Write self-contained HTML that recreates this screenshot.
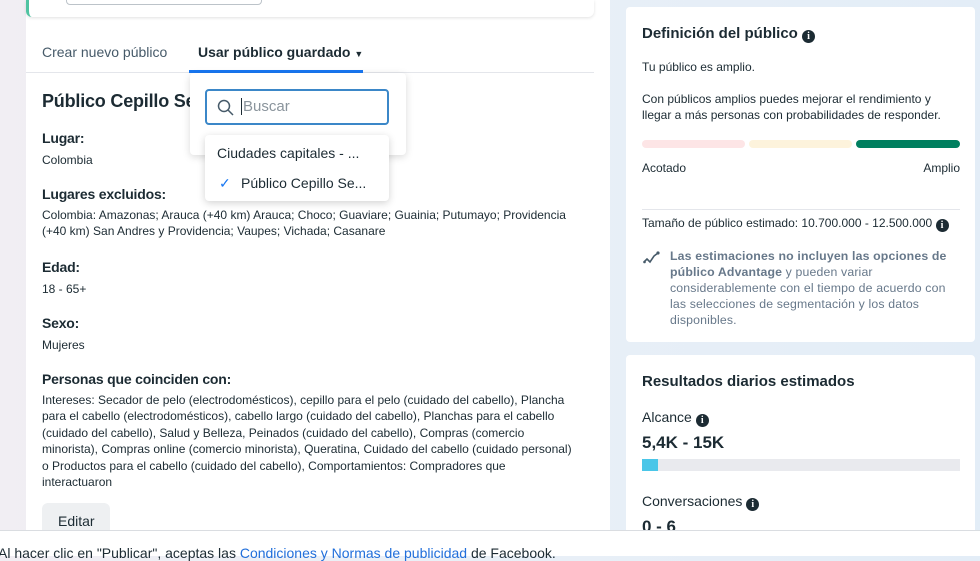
<!DOCTYPE html>
<html><head><meta charset="utf-8"><style>
*{box-sizing:border-box;margin:0;padding:0}
body{width:980px;height:556px;overflow:hidden;font-family:"Liberation Sans",sans-serif;color:#1c2b33;background:linear-gradient(90deg,#f1eef3 0%,#eaf0f7 40%,#e3edf7 100%);position:relative}
.main{position:absolute;left:26px;top:0;width:584px;height:540px;background:#fff}
.topcard{position:absolute;left:26px;top:0;width:568px;height:17px;background:#fff;border-left:3px solid #4fc3a1;border-radius:0 0 6px 6px;box-shadow:0 1px 3px rgba(0,0,0,.12)}
.topinput{position:absolute;left:37px;top:-6px;width:196px;height:11px;border:1px solid #bcc3c9;border-radius:4px}
.tabs{position:absolute;left:26px;top:38px;width:568px;height:35px;border-bottom:1px solid #e4e6eb}
.tab{position:absolute;top:6px;font-size:14px}
.sel{position:absolute;left:163px;top:32px;width:174px;height:3px;background:#1877f2}
.t{position:absolute;left:42px;font-size:12px;line-height:16.4px}
.h{position:absolute;left:42px;font-size:14px;font-weight:bold;letter-spacing:-.2px}
.pop{position:absolute;left:190px;top:73px;width:216px;height:82px;background:#fff;border-radius:4px;box-shadow:0 2px 8px rgba(0,0,0,.15)}
.search{position:absolute;left:205px;top:89px;width:184px;height:36px;border:2px solid #3b87c8;border-radius:4px;background:#fff}
.list{position:absolute;left:205px;top:135px;width:184px;height:66px;background:#fff;border-radius:4px;box-shadow:0 2px 8px rgba(0,0,0,.18)}
.card{position:absolute;left:626px;background:#fff;border-radius:4px;width:349px}
.r{position:absolute;font-size:12px}
.foot{position:absolute;left:0;top:530px;width:980px;height:26px;background:#fff;border-top:1px solid #dadde1;font-size:14px;padding:14px 0 0 0px}
.btn{position:absolute;left:42px;top:503px;width:68px;height:32px;background:#eef0f2;border-radius:6px;font-size:14px;padding:10px 0 0 16px}
.i{display:inline-block;width:13px;height:13px;border-radius:50%;background:#1c2b33;color:#fff;font-size:10px;font-weight:bold;text-align:center;line-height:13px;vertical-align:-1px;font-family:"Liberation Serif",serif}
</style></head><body>
<div class="main"></div>
<div class="topcard"><div class="topinput"></div></div>
<div class="tabs">
 <div class="tab" style="left:16px;color:#465a69">Crear nuevo público</div>
 <div class="tab" style="left:172px;font-weight:bold;">Usar público guardado <span style="font-size:9px">▼</span></div>
 <div class="sel"></div>
</div>
<div class="h" style="top:91px;font-size:18px">Público Cepillo Se</div>
<div class="h" style="top:130px">Lugar:</div>
<div class="t" style="top:152px">Colombia</div>
<div class="h" style="top:186px">Lugares excluidos:</div>
<div class="t" style="top:207px">Colombia: Amazonas; Arauca (+40 km) Arauca; Choco; Guaviare; Guainia; Putumayo; Providencia<br>(+40 km) San Andres y Providencia; Vaupes; Vichada; Casanare</div>
<div class="h" style="top:259px">Edad:</div>
<div class="t" style="top:281px">18 - 65+</div>
<div class="h" style="top:315px">Sexo:</div>
<div class="t" style="top:337px">Mujeres</div>
<div class="h" style="top:371px">Personas que coinciden con:</div>
<div class="t" style="top:392px;width:535px">Intereses: Secador de pelo (electrodomésticos), cepillo para el pelo (cuidado del cabello), Plancha<br>para el cabello (electrodomésticos), cabello largo (cuidado del cabello), Planchas para el cabello<br>(cuidado del cabello), Salud y Belleza, Peinados (cuidado del cabello), Compras (comercio<br>minorista), Compras online (comercio minorista), Queratina, Cuidado del cabello (cuidado personal)<br>o Productos para el cabello (cuidado del cabello), Comportamientos: Compradores que<br>interactuaron</div>
<div class="btn">Editar</div>

<div class="pop"></div>
<div class="search">
 <svg style="position:absolute;left:10px;top:8px" width="17" height="17" viewBox="0 0 17 17"><circle cx="7" cy="7" r="5.5" fill="none" stroke="#465a69" stroke-width="1.5"/><path d="M11 11l5 5" stroke="#465a69" stroke-width="1.5"/></svg>
 <div style="position:absolute;left:34px;top:7px;font-size:15px;color:#8a949c;border-left:1px solid #1c2b33;padding-left:1px">Buscar</div>
</div>
<div class="list">
 <div style="position:absolute;left:12px;top:10px;font-size:14px;color:#1c2b33">Ciudades capitales - ...</div>
 <div style="position:absolute;left:14px;top:40px;font-size:14px;color:#1877f2">✓</div>
 <div style="position:absolute;left:36px;top:40px;font-size:14px">Público Cepillo Se...</div>
</div>

<div class="card" style="top:7px;height:335px">
 <div class="r" style="left:16px;top:18px;font-size:15px;font-weight:bold;white-space:nowrap">Definición del público <span class="i">i</span></div>
 <div class="r" style="left:16px;top:53px">Tu público es amplio.</div>
 <div class="r" style="left:16px;top:84px;line-height:16px">Con públicos amplios puedes mejorar el rendimiento y<br>llegar a más personas con probabilidades de responder.</div>
 <div style="position:absolute;left:16px;top:133px;width:103px;height:8px;border-radius:4px;background:#fde5e6"></div>
 <div style="position:absolute;left:123px;top:133px;width:103px;height:8px;border-radius:4px;background:#fdf3dc"></div>
 <div style="position:absolute;left:230px;top:133px;width:104px;height:8px;border-radius:4px;background:#007f5f"></div>
 <div class="r" style="left:16px;top:154px">Acotado</div>
 <div class="r" style="right:15px;top:154px">Amplio</div>
 <div style="position:absolute;left:16px;top:202px;width:318px;height:1px;background:#e4e6eb"></div>
 <div class="r" style="left:16px;top:209px;white-space:nowrap">Tamaño de público estimado: 10.700.000 - 12.500.000 <span class="i">i</span></div>
 <svg style="position:absolute;left:17px;top:244px" width="18" height="14" viewBox="0 0 18 14"><path d="M1 11l3-3 3 3 4-6 4-3" fill="none" stroke="#465a69" stroke-width="1.6"/><circle cx="15" cy="2" r="1.6" fill="#465a69"/><circle cx="1.5" cy="11" r="1.3" fill="#465a69"/></svg>
 <div class="r" style="left:44px;top:241px;line-height:16px;color:#67788a;width:290px;font-size:12.3px;letter-spacing:.15px"><b>Las estimaciones no incluyen las opciones de<br>público Advantage</b> y pueden variar<br>considerablemente con el tiempo de acuerdo con<br>las selecciones de segmentación y los datos<br>disponibles.</div>
</div>
<div class="card" style="top:355px;height:200px">
 <div class="r" style="left:16px;top:18px;font-size:15px;font-weight:bold">Resultados diarios estimados</div>
 <div class="r" style="left:16px;top:54px;font-size:14px">Alcance <span class="i">i</span></div>
 <div class="r" style="left:16px;top:78px;font-size:17px;font-weight:bold">5,4K - 15K</div>
 <div style="position:absolute;left:16px;top:104px;width:318px;height:12px;background:#e9eaee"><div style="width:16px;height:12px;background:#4ac6e8"></div></div>
 <div class="r" style="left:16px;top:138px;font-size:14px">Conversaciones <span class="i">i</span></div>
 <div class="r" style="left:16px;top:162px;font-size:17px;font-weight:bold">0 - 6</div>
</div>
<div class="foot"><span style="position:relative;left:-2px">Al hacer clic en "Publicar", aceptas las <span style="color:#216fdb">Condiciones y Normas de publicidad</span> de Facebook.</span></div>
</body></html>
